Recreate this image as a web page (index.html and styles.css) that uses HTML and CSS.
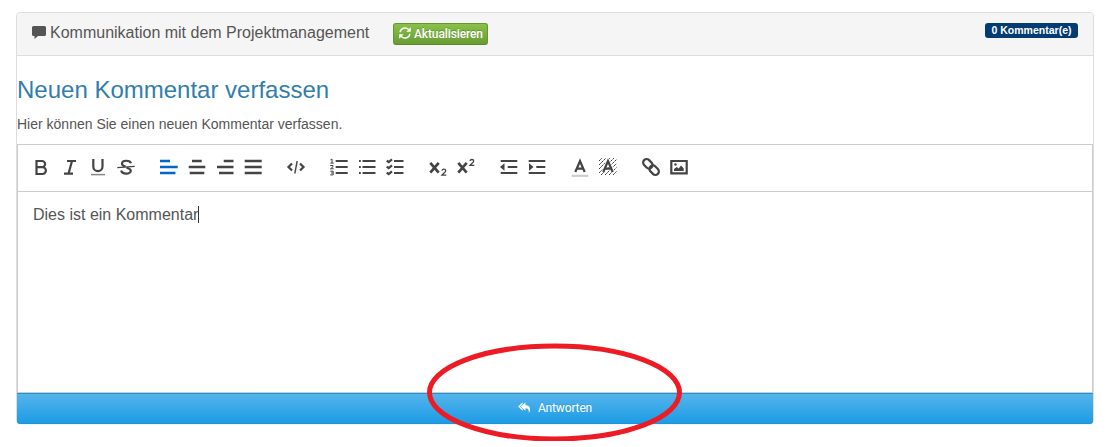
FILE: index.html
```html
<!DOCTYPE html>
<html lang="de">
<head>
<meta charset="utf-8">
<title>Kommunikation mit dem Projektmanagement</title>
<link rel="stylesheet" href="styles.css">
</head>
<body>
<section class="panel">
  <header class="panel-heading">
    <svg class="comment-icon" viewBox="0 0 14 13"><path d="M1.500 0h11Q14 0 14 1.500v7Q14 10 12.500 10H6l-3.500 3V10h-1Q0 10 0 8.500v-7Q0 0 1.500 0z"/></svg>
    <span class="panel-title">Kommunikation mit dem Projektmanagement</span>
    <button class="refresh"><svg viewBox="0 0 12 12"><path d="M1.200 5.300C1.500 1.200 6.500-.4 9.700 2.500M10.800 6.700C10.500 10.800 5.500 12.400 2.300 9.500" fill="none" stroke="#fff" stroke-width="1.600"/><path d="M11.800.2v4.500H7.300zM.2 11.800V7.300h4.500z" fill="#fff"/></svg><span>Aktualisieren</span></button>
    <span class="badge">0 Kommentar(e)</span>
  </header>
  <h3 class="title">Neuen Kommentar verfassen</h3>
  <p class="hint">Hier können Sie einen neuen Kommentar verfassen.</p>
  <div class="toolbar">
    <div class="group">
      <svg viewBox="0 0 20 20"><path d="M4.500 4h5.500a3 3 0 0 1 0 6.200H4.500zM4.500 10.200h6a3.300 3.300 0 0 1 0 6.800h-6z"/></svg>
      <svg viewBox="0 0 20 20"><path d="M7 4h9M4 16.700h9M12 4L8.500 16.700"/></svg>
      <svg viewBox="0 0 20 20"><path d="M5.300 2v7.500a4.600 4.600 0 0 0 9.200 0V2"/><path class="thin" d="M3 17.600h14"/></svg>
      <svg viewBox="0 0 20 20"><path d="M15 6.300C14.200 3 6 2.600 6 6.700C6 8.300 7.500 9 9.500 9.500M10.500 10.700C13 11.300 14.800 12 14.800 13.700C14.800 17.600 5.900 17.600 5.200 13.500"/><path class="fine" d="M1.300 10.600L18.700 9.400"/></svg>
    </div>
    <div class="group lines">
      <svg class="active" viewBox="0 0 20 20"><path d="M1 4h10M1 10h17.700M1 16h15.500"/></svg>
      <svg viewBox="0 0 20 20"><path d="M5 4h9.700M1.700 10h16.600M2.700 16h14.600"/></svg>
      <svg viewBox="0 0 20 20"><path d="M8.700 4h9.800M2 10h16.500M4 16h14.500"/></svg>
      <svg viewBox="0 0 20 20"><path d="M1.700 4h17M1.700 10h17M1.700 16h17"/></svg>
    </div>
    <div class="group">
      <svg viewBox="0 0 20 20"><path d="M6 6.500L2.500 10L6 13.500M14 6.500L17.500 10L14 13.500"/><path class="fine" d="M11.200 4L8.800 16.500"/></svg>
    </div>
    <div class="group">
      <svg viewBox="0 0 20 20"><path d="M6.700 4h12M6.700 10h12M6.700 16h12"/><path class="number" d="M1.500 2.800l1.500-.7v4M1.300 6.100h3.400M1.200 8.500h2.800v1.200L1.500 11.800h3.200M1.200 14.200h3v3.700h-3M2 16h2"/></svg>
      <svg viewBox="0 0 20 20"><path d="M2 4h1.800M2 10h1.800M2 16h1.800M5.500 4h13M5.500 10h13M5.500 16h13"/></svg>
      <svg viewBox="0 0 20 20"><path d="M9 4h9.500M9 10h9.500M9 16h9.500M1.700 3.600l2 1.500L7 2.400M1.700 9.600l2 1.500L7 8.400M1.700 15.600l2 1.500L7 14.400"/></svg>
    </div>
    <div class="group">
      <svg viewBox="0 0 20 20"><path class="bold" d="M2.300 5.900l8.400 9.800M10.700 5.900l-8.400 9.800"/><path class="small" d="M14 13.600q.3-1.400 1.900-1.400 1.800 0 1.800 1.500 0 1-1.400 2L14 18.100h4.300"/></svg>
      <svg viewBox="0 0 20 20"><path class="bold" d="M2.300 5.900l8.400 9.800M10.700 5.900l-8.400 9.800"/><path class="small" d="M14 3.900q.3-1.400 1.900-1.400 1.800 0 1.800 1.500 0 1-1.400 2L14 8.400h4.300"/></svg>
    </div>
    <div class="group">
      <svg viewBox="0 0 20 20"><path d="M1.700 4h16.600M8.700 10h9.600M1.700 16h16.600"/><path class="fill" d="M1 10l4.500-3.800v7.600z"/></svg>
      <svg viewBox="0 0 20 20"><path d="M1.700 4h16.600M9.300 10h9M1.700 16h16.600"/><path class="fill" d="M6.500 10L2 6.200v7.600z"/></svg>
    </div>
    <div class="group">
      <svg viewBox="0 0 20 20"><path d="M5.300 15L10 4l4.700 11M7 11.700h6"/><path class="swatch" d="M1.700 18.800h16.600"/></svg>
      <svg viewBox="0 0 20 20"><path class="hatch" d="M1 4l3-3M1 8l7-7M1 12L12 1M1 16L16 1M3 18L18.500 2.500M7 18L18.500 6.500M11 18l7.500-7.500M15 18l3.500-3.500"/><path class="halo" d="M5.500 15L10 4l4.500 11"/><path d="M5.300 15L10 4l4.700 11M7 11.700h6"/></svg>
    </div>
    <div class="group">
      <svg viewBox="0 0 20 20"><g transform="rotate(45 10 10)"><rect x=".3" y="6.500" width="10.500" height="7" rx="3.500"/><rect x="9.200" y="6.500" width="10.500" height="7" rx="3.500"/></g></svg>
      <svg viewBox="0 0 20 20"><path d="M2.300 4h15.400v12.400H2.300z"/><path class="fill" d="M5 14v-2l2.700-2 2 1.500L12 8.500l2.700 2.700V14z"/><circle class="fill" cx="6.500" cy="7.500" r="1.200"/></svg>
    </div>
  </div>
  <div class="editor"><span class="text">Dies ist ein Kommentar</span><span class="caret"></span></div>
  <button class="reply"><svg viewBox="0 0 14 12"><path d="M5 0L0 4.500 5 9V7.200L2.200 4.500 5 1.800z"/><path d="M8 0L3 4.500 8 9V6.300c2.800 0 4 1.500 3.600 5.200C14.300 7.200 13 2.900 8 2.700z"/></svg><span>Antworten</span></button>
</section>
<svg class="marker" viewBox="0 0 256 98"><ellipse cx="127.500" cy="49.500" rx="125" ry="46.500"/></svg>
</body>
</html>
```
FILE: styles.css
```css
* { box-sizing: border-box; }
body {
  margin: 0;
  padding: 12px 12px 0 16px;
  height: 447px;
  overflow: hidden;
  background: #fff;
  color: #555;
  font-family: "Liberation Sans", Arial, sans-serif;
}
.panel {
  width: 1078px;
  height: 412px;
  border: 1px solid #ddd;
  border-radius: 4px;
  box-shadow: 0 1px 1px rgba(0, 0, 0, .05);
}
.panel-heading {
  display: flex;
  align-items: flex-start;
  height: 43px;
  padding: 10px 15px;
  background: #f5f5f5;
  border-bottom: 1px solid #ddd;
  border-radius: 3px 3px 0 0;
}
.comment-icon { width: 14px; height: 13px; margin: 3px 4px 0 0; fill: #555; }
.panel-title { font-size: 16px; line-height: 20px; white-space: nowrap; width: 343px; }
.refresh {
  display: flex;
  align-items: center;
  gap: 3px;
  width: 95px;
  height: 22px;
  padding: 0 5px;
  border: 1px solid #669533;
  border-bottom-color: #5a8829;
  border-radius: 3px;
  background: linear-gradient(#88c149, #699c34);
  color: #fff;
  font: 500 12px/20px Roboto, sans-serif;
  letter-spacing: -.12px;
  text-shadow: 0 -1px 0 rgba(0, 0, 0, .2);
}
.refresh svg { width: 12px; height: 12px; flex: none; margin-top: -2px; }
.badge {
  margin-left: auto;
  width: 93px;
  height: 15px;
  border-radius: 3px;
  background: #033c73;
  color: #fff;
  font-size: 10.5px;
  font-weight: bold;
  line-height: 15px;
  text-align: center;
  white-space: nowrap;
}
.title { margin: 20px 0 0; font-size: 24px; font-weight: 400; line-height: 28px; color: #317eac; }
.hint { margin: 10px 0 0; font-size: 14px; line-height: 20px; height: 30px; }
.toolbar {
  display: flex;
  gap: 15px;
  height: 48px;
  padding: 12px 10px;
  border: 1px solid #ccc;
}
.group { display: flex; }
.group svg {
  width: 28px;
  height: 20px;
  fill: none;
  stroke: #444;
  stroke-width: 2.2;
}
.lines svg { stroke-width: 2.4; }
.group .active { stroke: #06c; stroke-width: 2.6; }
.group .thin { stroke: #888; stroke-width: 1.5; }
.group .fine { stroke-width: 1.4; }
.group .number { stroke-width: 1; }
.group .small { stroke-width: 1.3; }
.group .bold { stroke-width: 2.7; }
.group .fill { fill: #444; stroke: none; }
.group .swatch { stroke: #ccc; }
.group .hatch { stroke-width: 1; stroke-dasharray: 2.5 .7; }
.group .halo { stroke: #fff; stroke-width: 4; }
.editor {
  display: flex;
  height: 201px;
  padding: 13px 15px;
  border: 1px solid #ccc;
  border-top: 0;
  font-size: 16px;
  line-height: 19px;
}
.caret { width: 1px; height: 17px; margin-top: 1px; background: #333; }
.reply {
  display: flex;
  align-items: center;
  justify-content: center;
  gap: 7px;
  width: 100%;
  height: 31px;
  padding: 0 0 2px;
  border: 1px solid #1d94da;
  border-width: 1px 0;
  border-radius: 0 0 3px 3px;
  background: linear-gradient(#54b4eb, #1d9ce5);
  color: #fff;
  font: 400 12px/20px Roboto, sans-serif;
  letter-spacing: -.15px;
  text-shadow: 0 -1px 0 rgba(0, 0, 0, .1);
}
.reply svg { width: 13px; height: 12px; fill: #fff; }
/* Hand-drawn highlight around the reply button */
.marker { position: absolute; left: 427px; top: 343px; width: 256px; height: 98px; pointer-events: none; }
.marker ellipse { fill: none; stroke: #ed1c24; stroke-width: 5; }
```
